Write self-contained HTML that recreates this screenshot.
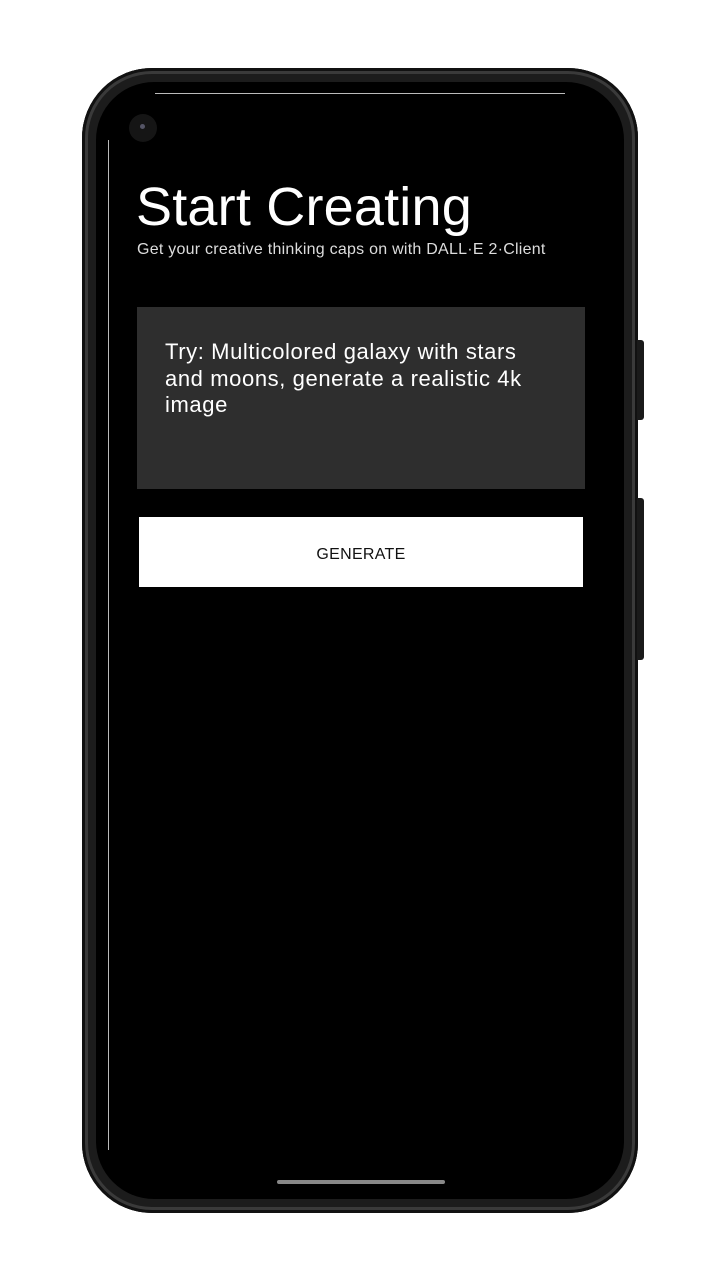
<!DOCTYPE html>
<html><head><style>
body{margin:0;width:720px;height:1280px;background:#fff;position:relative;overflow:hidden;font-family:"Liberation Sans",sans-serif}
.phone{position:absolute;left:82px;top:68px;width:556px;height:1145px;border-radius:70px;background:#1c1c1c;box-shadow:inset 0 0 0 3px #111,inset 0 0 0 6px #3a3a3a}
.screen{position:absolute;left:96px;top:82px;width:528px;height:1117px;border-radius:58px;background:#000}
.btn{position:absolute;background:#1a1a1a;left:637px;width:7px;border-radius:0 3px 3px 0}
</style></head><body>
<div class="phone"></div>
<div class="btn" style="top:340px;height:80px"></div>
<div class="btn" style="top:498px;height:162px"></div>
<div class="screen"></div>
<div style="position:absolute;left:155px;top:93px;width:410px;height:1px;background:#bbb"></div>
<div style="position:absolute;left:108px;top:140px;width:1px;height:1010px;background:#bbb"></div>
<div style="position:absolute;left:129px;top:114px;width:28px;height:28px;border-radius:50%;background:#151515"></div>
<div style="position:absolute;left:140px;top:124px;width:5px;height:5px;border-radius:50%;background:#556"></div>
<div style="position:absolute;left:136px;top:172px;color:#fff;font-size:54px;letter-spacing:0.2px;line-height:70px">Start Creating</div>
<div style="position:absolute;left:137px;top:240px;color:#ddd;font-size:16px;letter-spacing:0.25px;line-height:20px">Get your creative thinking caps on with DALL·E 2·Client</div>
<div style="position:absolute;left:137px;top:307px;width:448px;height:182px;background:#2e2e2e"></div>
<div style="position:absolute;left:165px;top:339px;width:370px;color:#fff;font-size:22px;letter-spacing:0.6px;line-height:26.5px">Try: Multicolored galaxy with stars and moons, generate a realistic 4k image</div>
<div style="position:absolute;left:139px;top:517px;width:444px;height:70px;background:#fff;color:#111;font-size:16px;text-align:center;line-height:76px;letter-spacing:0.3px">GENERATE</div>
<div style="position:absolute;left:277px;top:1180px;width:168px;height:4px;border-radius:2px;background:#888"></div>
</body></html>
